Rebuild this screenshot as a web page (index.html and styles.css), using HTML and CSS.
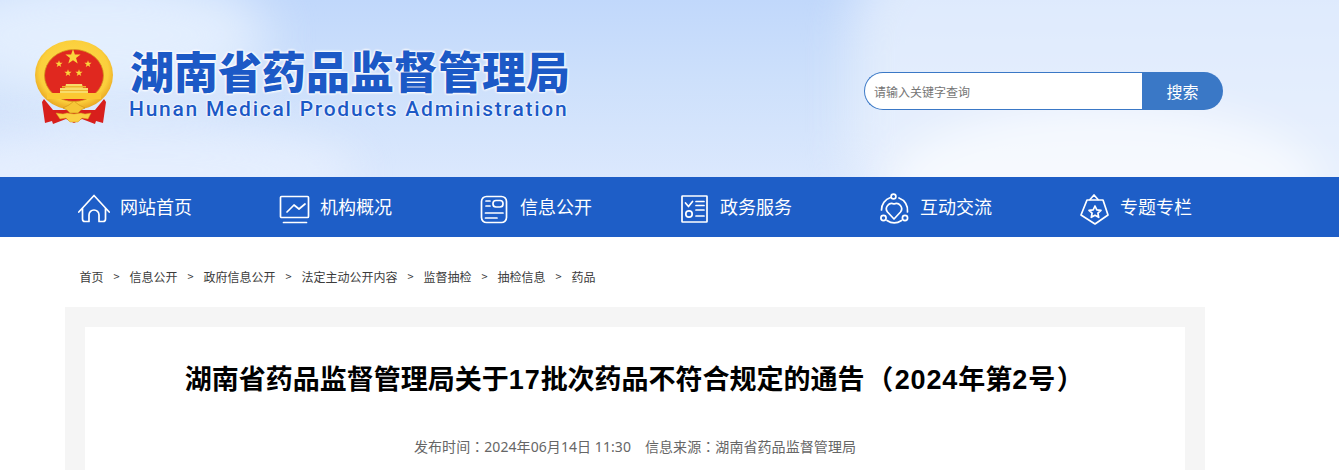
FILE: index.html
```html
<!DOCTYPE html>
<html lang="zh-CN">
<head>
<meta charset="utf-8">
<title>湖南省药品监督管理局</title>
<link rel="stylesheet" href="styles.css">
</head>
<body>
<header class="site-header">
  <div class="cloud cloud-a"></div>
  <div class="cloud cloud-b"></div>
  <div class="cloud cloud-c"></div>
  <div class="cloud cloud-d"></div>
  <a class="brand" href="#">
    <svg class="emblem" viewBox="0 0 78 84" aria-hidden="true">
      <defs>
        <radialGradient id="gold" cx="50%" cy="45%" r="55%"><stop offset="0" stop-color="#ffdf4e"/><stop offset=".8" stop-color="#fbcf3c"/><stop offset="1" stop-color="#e9a520"/></radialGradient>
        <path id="star" d="M0-1 .235-.324.951-.309.38.124.588.809 0 .4-.588.809-.38.124-.951-.309-.235-.324Z" fill="#fbd43c"/>
      </defs>
      <path d="M9 59 L7 62 L10 83 L17 81 L18 84 L31 79 L39 83 L47 79 L60 84 L61 81 L68 83 L71 62 L69 59 L60 70 L18 70Z" fill="#d81f1c"/>
      <ellipse cx="39" cy="35" rx="39" ry="35" fill="url(#gold)"/>
      <ellipse cx="39" cy="35.500" rx="29.500" ry="26" fill="#e0281f" stroke="#d4951c" stroke-width=".8"/>
      <use href="#star" transform="translate(38 17) scale(8)"/>
      <use href="#star" transform="translate(24 24) scale(3.800)"/>
      <use href="#star" transform="translate(53 24) scale(3.800)"/>
      <use href="#star" transform="translate(33 33) scale(3.800)"/>
      <use href="#star" transform="translate(44 33) scale(3.800)"/>
      <path d="M30 48l1-4h16l1 4h5v5H25v-5Z" fill="#f8dc6a"/>
      <path d="M27 46h24v1.500H27ZM25 50h28v1H25Z" fill="#eeb52e"/>
      <path d="M12 53h54v6H12Z" fill="#fbc832"/>
      <path d="M28 68l6-3 5-4 5 4 6 3-4 2-3 3h-8l-3-3Z" fill="#f6c636" stroke="#cf8f16" stroke-width=".6"/>
      <path d="M21 73l7 1 4-1 7 1 7-1 4 1 6-1-3 6-6-1-4 4h-8l-4-4-6 1Z" fill="#fbd043" stroke="#d89a1b" stroke-width=".5"/>
    </svg>
    <div class="brand-text">
      <div class="brand-cn">湖南省药品监督管理局</div>
      <div class="brand-en">Hunan Medical Products Administration</div>
    </div>
  </a>
  <form class="search">
    <input class="search-input" type="text" placeholder="请输入关键字查询">
    <button class="search-btn" type="button">搜索</button>
  </form>
</header>

<nav class="main-nav">
  <a class="nav-item" href="#">
    <svg class="nav-icon" viewBox="0 0 32 32"><path d="M.8 21 16 4.500 31.200 21M4.500 17v11a2.500 2.500 0 0 0 2.500 2.500h4V24a5 5 0 0 1 10 0v6.500h4a2.500 2.500 0 0 0 2.500-2.500V17"/></svg>
    <span>网站首页</span>
  </a>
  <a class="nav-item" href="#">
    <svg class="nav-icon" viewBox="0 0 32 32"><rect x="2.500" y="5.500" width="28" height="21" rx="1"/><path d="M9 21l7-7 5 4 6-5M5.500 31.500h23"/></svg>
    <span>机构概况</span>
  </a>
  <a class="nav-item" href="#">
    <svg class="nav-icon" viewBox="0 0 32 32"><rect x="3.500" y="5.500" width="25" height="26" rx="5"/><path d="M8 10h4M8 15h4M7.500 22h17.500M7.500 27h11.500"/><rect x="15" y="9.500" width="10" height="6.500" rx="3"/></svg>
    <span>信息公开</span>
  </a>
  <a class="nav-item" href="#">
    <svg class="nav-icon" viewBox="0 0 32 32"><rect x="4" y="5" width="25" height="26" rx=".5"/><path d="M7.500 12l3 3.500 4-5M18 10.500h8M18 14.500h8M18 19h8M18 25h8"/><circle cx="11" cy="23" r="3.200"/></svg>
    <span>政务服务</span>
  </a>
  <a class="nav-item" href="#">
    <svg class="nav-icon" viewBox="0 0 32 32"><path d="M16 28 9.500 21a5.300 5.300 0 0 1 6.500-8 5.300 5.300 0 0 1 6.500 8Z"/><path d="M12.500 6.500A13 13 0 0 0 3.500 19M21 7a13 13 0 0 1 8.500 14M9 29.500a13 13 0 0 0 14.500 0"/><circle cx="15.500" cy="5.500" r="2.400"/><circle cx="5.500" cy="27" r="2.600"/><circle cx="27" cy="27" r="2.600"/></svg>
    <span>互动交流</span>
  </a>
  <a class="nav-item" href="#">
    <svg class="nav-icon" viewBox="0 0 32 32"><path d="M12 8.500l4-4.500 4 4.500"/><path d="M9 9h16l5 15-13 9-14-9Z"/><path d="M17 15l1.800 3.800 4.200.5-3.100 2.900.8 4.100-3.700-2-3.700 2 .8-4.100-3.100-2.900 4.200-.5Z"/></svg>
    <span>专题专栏</span>
  </a>
</nav>

<div class="crumbs">
  <a href="#">首页</a><i>&gt;</i><a href="#">信息公开</a><i>&gt;</i><a href="#">政府信息公开</a><i>&gt;</i><a href="#">法定主动公开内容</a><i>&gt;</i><a href="#">监督抽检</a><i>&gt;</i><a href="#">抽检信息</a><i>&gt;</i><a href="#">药品</a>
</div>

<main class="panel">
  <article class="card">
    <h1 class="title">湖南省药品监督管理局关于<span class="num">17</span>批次药品不符合规定的通告<span class="punct paren" lang="zh-TW">（</span><span class="num">2024</span>年第<span class="num">2</span>号<span class="punct paren" lang="zh-TW">）</span></h1>
    <p class="meta"><span>发布时间<span class="punct" lang="zh-TW">：</span>2024年06月14日 11:30</span><span>信息来源<span class="punct" lang="zh-TW">：</span>湖南省药品监督管理局</span></p>
  </article>
</main>
</body>
</html>
```
FILE: styles.css
```css
* { box-sizing: border-box; }
html, body { height: 100%; }
body {
  margin: 0;
  background: #fff;
  font-family: "Liberation Sans", "Noto Sans CJK SC", sans-serif;
}
a { color: inherit; text-decoration: none; }

.site-header {
  position: relative;
  height: 177px;
  display: flex;
  align-items: flex-start;
  overflow: hidden;
  background: linear-gradient(180deg, #c1d8fb 0%, #cde0fb 45%, #dbe8fd 100%);
}
.cloud { position: absolute; border-radius: 50%; }
.cloud-a { left: 850px; top: -80px; width: 720px; height: 340px; border-radius: 120px; background: rgba(240,246,254,.62); filter: blur(24px); }
.cloud-b { left: 890px; top: 105px; width: 430px; height: 160px; background: rgba(255,255,255,.6); filter: blur(20px); }
.cloud-c { left: -70px; top: -30px; width: 340px; height: 130px; background: rgba(240,246,255,.7); filter: blur(26px); }
.cloud-d { left: -60px; top: 125px; width: 420px; height: 90px; background: rgba(236,244,255,.6); filter: blur(20px); }

.brand {
  position: relative;
  display: flex;
  align-items: flex-start;
  margin: 40px 0 0 35px;
}
.emblem { width: 78px; height: 84px; flex: none; }
.brand-text { margin: 3px 0 0 16px; width: 442px; }
.brand-cn {
  font: 900 44px/55px "Noto Sans CJK SC", sans-serif;
  color: #1c59c6;
  text-shadow: 0 0 2px #fff, 0 0 3px #fff, 0 0 3px #fff, 0 0 3px #fff;
  white-space: nowrap;
  padding-left: 1px;
}
.brand-en {
  font: 500 21px/22px Roboto, sans-serif;
  color: #1c59c6;
  letter-spacing: 1.750px;
  text-shadow: 0 0 2px #fff, 0 0 2px #fff, 0 0 2px #fff;
  white-space: nowrap;
}

.search {
  position: relative;
  display: flex;
  width: 359px;
  height: 38px;
  margin: 72px 116px 0 auto;
}
.search-input {
  flex: 1;
  min-width: 0;
  height: 38px;
  padding: 0 9px;
  border: 1px solid #3a78c6;
  border-right: 0;
  border-radius: 19px 0 0 19px;
  background: #fff;
  font: 12px "Noto Sans CJK SC", sans-serif;
  outline: 0;
}
.search-input::placeholder { color: #757575; opacity: 1; }
.search-btn {
  width: 81px;
  height: 38px;
  border: 0;
  border-radius: 0 19px 19px 0;
  background: #3a78c6;
  color: #fff;
  font: 16px "Noto Sans CJK SC", sans-serif;
  padding: 0;
}

.main-nav {
  display: flex;
  height: 60px;
  padding-left: 78px;
  background: #1e5ec7;
}
.nav-item {
  display: flex;
  align-items: center;
  gap: 10px;
  width: 200px;
  color: #fff;
  font: 18px "Noto Sans CJK SC", sans-serif;
}
.nav-item span { padding-bottom: 2px; }
.nav-icon {
  width: 32px;
  height: 32px;
  flex: none;
  fill: none;
  stroke: #fff;
  stroke-width: 1.700;
  stroke-linecap: round;
  stroke-linejoin: round;
  overflow: visible;
}

.crumbs {
  display: flex;
  align-items: center;
  height: 70px;
  padding: 8px 0 0 79.500px;
  font: 12px "Noto Sans CJK SC", sans-serif;
  color: #3c3c3c;
}
.crumbs i { width: 26px; text-align: center; font-style: normal; font-size: 11px; }

.panel {
  width: 1140px;
  margin-left: 65px;
  padding: 20px 20px 0;
  background: #f5f5f5;
}
.card {
  height: 143px;
  padding-top: 31px;
  background: #fff;
}
.title {
  margin: 0;
  text-align: center;
  font: 700 27px/40px "Liberation Sans", "Noto Sans CJK SC", sans-serif;
  color: #000;
}
.num { letter-spacing: .9px; }
.punct { font-family: "Noto Sans CJK TC", sans-serif; }
.paren { padding: 0 1.500px; }
.meta {
  display: flex;
  justify-content: center;
  gap: 14px;
  margin: 36px 0 0;
  font-family: "Noto Sans", "Noto Sans CJK SC", sans-serif;
  font-size: 14px;
  line-height: 20px;
  letter-spacing: .07px;
  color: #666;
}
```
